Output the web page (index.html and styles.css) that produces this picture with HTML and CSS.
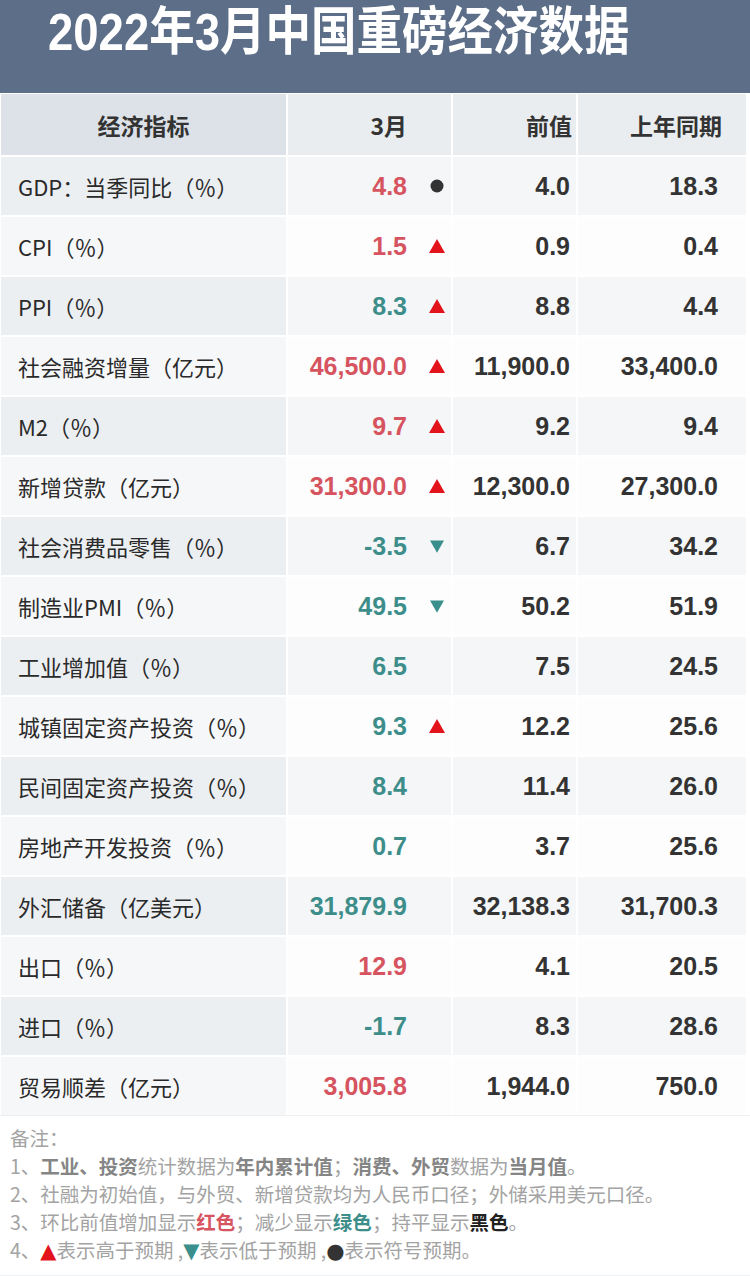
FILE: index.html
```html
<!DOCTYPE html>
<html lang="zh-CN">
<head>
<meta charset="utf-8">
<title>2022年3月中国重磅经济数据</title>
<link rel="stylesheet" href="styles.css">
</head>
<body>
<div class="page">
  <header class="banner">
    <h1 class="title">2022年3月中国重磅经济数据</h1>
  </header>

  <div class="table">
    <div class="row head">
      <div class="cell c1 center">经济指标</div>
      <div class="cell c2"><span class="num">3月</span><span class="sym"></span></div>
      <div class="cell c3">前值</div>
      <div class="cell c4">上年同期</div>
    </div>

    <div class="row odd">
      <div class="cell c1">GDP：当季同比（％）</div>
      <div class="cell c2"><span class="num red">4.8</span><span class="sym"><svg class="dot" viewBox="0 0 14 14"><circle cx="7" cy="7" r="6.5"/></svg></span></div>
      <div class="cell c3">4.0</div>
      <div class="cell c4">18.3</div>
    </div>
    <div class="row even">
      <div class="cell c1">CPI（％）</div>
      <div class="cell c2"><span class="num red">1.5</span><span class="sym"><svg class="up" viewBox="0 0 16 14"><polygon points="8,0 16,14 0,14"/></svg></span></div>
      <div class="cell c3">0.9</div>
      <div class="cell c4">0.4</div>
    </div>
    <div class="row odd">
      <div class="cell c1">PPI（％）</div>
      <div class="cell c2"><span class="num green">8.3</span><span class="sym"><svg class="up" viewBox="0 0 16 14"><polygon points="8,0 16,14 0,14"/></svg></span></div>
      <div class="cell c3">8.8</div>
      <div class="cell c4">4.4</div>
    </div>
    <div class="row even">
      <div class="cell c1">社会融资增量（亿元）</div>
      <div class="cell c2"><span class="num red">46,500.0</span><span class="sym"><svg class="up" viewBox="0 0 16 14"><polygon points="8,0 16,14 0,14"/></svg></span></div>
      <div class="cell c3">11,900.0</div>
      <div class="cell c4">33,400.0</div>
    </div>
    <div class="row odd">
      <div class="cell c1">M2（％）</div>
      <div class="cell c2"><span class="num red">9.7</span><span class="sym"><svg class="up" viewBox="0 0 16 14"><polygon points="8,0 16,14 0,14"/></svg></span></div>
      <div class="cell c3">9.2</div>
      <div class="cell c4">9.4</div>
    </div>
    <div class="row even">
      <div class="cell c1">新增贷款（亿元）</div>
      <div class="cell c2"><span class="num red">31,300.0</span><span class="sym"><svg class="up" viewBox="0 0 16 14"><polygon points="8,0 16,14 0,14"/></svg></span></div>
      <div class="cell c3">12,300.0</div>
      <div class="cell c4">27,300.0</div>
    </div>
    <div class="row odd">
      <div class="cell c1">社会消费品零售（％）</div>
      <div class="cell c2"><span class="num green">-3.5</span><span class="sym"><svg class="down" viewBox="0 0 16 14"><polygon points="0,0 16,0 8,14"/></svg></span></div>
      <div class="cell c3">6.7</div>
      <div class="cell c4">34.2</div>
    </div>
    <div class="row even">
      <div class="cell c1">制造业PMI（％）</div>
      <div class="cell c2"><span class="num green">49.5</span><span class="sym"><svg class="down" viewBox="0 0 16 14"><polygon points="0,0 16,0 8,14"/></svg></span></div>
      <div class="cell c3">50.2</div>
      <div class="cell c4">51.9</div>
    </div>
    <div class="row odd">
      <div class="cell c1">工业增加值（％）</div>
      <div class="cell c2"><span class="num green">6.5</span><span class="sym"></span></div>
      <div class="cell c3">7.5</div>
      <div class="cell c4">24.5</div>
    </div>
    <div class="row even">
      <div class="cell c1">城镇固定资产投资（％）</div>
      <div class="cell c2"><span class="num green">9.3</span><span class="sym"><svg class="up" viewBox="0 0 16 14"><polygon points="8,0 16,14 0,14"/></svg></span></div>
      <div class="cell c3">12.2</div>
      <div class="cell c4">25.6</div>
    </div>
    <div class="row odd">
      <div class="cell c1">民间固定资产投资（％）</div>
      <div class="cell c2"><span class="num green">8.4</span><span class="sym"></span></div>
      <div class="cell c3">11.4</div>
      <div class="cell c4">26.0</div>
    </div>
    <div class="row even">
      <div class="cell c1">房地产开发投资（％）</div>
      <div class="cell c2"><span class="num green">0.7</span><span class="sym"></span></div>
      <div class="cell c3">3.7</div>
      <div class="cell c4">25.6</div>
    </div>
    <div class="row odd">
      <div class="cell c1">外汇储备（亿美元）</div>
      <div class="cell c2"><span class="num green">31,879.9</span><span class="sym"></span></div>
      <div class="cell c3">32,138.3</div>
      <div class="cell c4">31,700.3</div>
    </div>
    <div class="row even">
      <div class="cell c1">出口（％）</div>
      <div class="cell c2"><span class="num red">12.9</span><span class="sym"></span></div>
      <div class="cell c3">4.1</div>
      <div class="cell c4">20.5</div>
    </div>
    <div class="row odd">
      <div class="cell c1">进口（％）</div>
      <div class="cell c2"><span class="num green">-1.7</span><span class="sym"></span></div>
      <div class="cell c3">8.3</div>
      <div class="cell c4">28.6</div>
    </div>
    <div class="row even">
      <div class="cell c1">贸易顺差（亿元）</div>
      <div class="cell c2"><span class="num red">3,005.8</span><span class="sym"></span></div>
      <div class="cell c3">1,944.0</div>
      <div class="cell c4">750.0</div>
    </div>
  </div>

  <div class="notes">
    <p>备注：</p>
    <p>1、<b>工业、投资</b>统计数据为<b>年内累计值</b>；<b>消费、外贸</b>数据为<b>当月值</b>。</p>
    <p>2、社融为初始值，与外贸、新增贷款均为人民币口径；外储采用美元口径。</p>
    <p>3、环比前值增加显示<b class="t-red">红色</b>；减少显示<b class="t-green">绿色</b>；持平显示<b class="t-black">黑色</b>。</p>
    <p>4、<span class="n-up">▲</span>表示高于预期 ,<span class="n-down">▼</span>表示低于预期 ,<span class="n-dot">●</span>表示符号预期。</p>
  </div>
</div>
</body>
</html>
```

FILE: styles.css
```css
* { box-sizing: border-box; }

html, body {
  margin: 0;
  padding: 0;
  background: #ffffff;
}

.page {
  width: 750px;
  height: 1276px;
  overflow: hidden;
  font-family: "Noto Sans CJK SC", "Noto Sans", sans-serif;
  color: #333333;
}

.banner {
  height: 93px;
  background: #5c6e88;
  padding: 2px 0 0 48px;
}

.title {
  margin: 0;
  font-family: "Liberation Sans", "Noto Sans CJK SC", sans-serif;
  font-weight: bold;
  font-size: 45.5px;
  line-height: 54px;
  color: #ffffff;
  transform: scaleY(1.15);
  transform-origin: left top;
}

.table {
  display: flex;
  flex-direction: column;
  gap: 2px;
  padding: 1px 4px 0 1px;
  background: #ffffff;
}

.row {
  display: grid;
  grid-template-columns: 285px 163px 123px 168px;
  column-gap: 2px;
  height: 58px;
}

.row.head {
  height: 61px;
}

.cell {
  display: flex;
  align-items: center;
  justify-content: flex-end;
  font-family: "Liberation Sans", "Noto Sans CJK SC", sans-serif;
  font-weight: bold;
  font-size: 25px;
  color: #333333;
}

.cell.c1 {
  justify-content: flex-start;
  padding-left: 17px;
  font-family: "Noto Sans CJK SC", sans-serif;
  font-weight: normal;
  font-size: 22px;
  color: #2a2a2a;
}

.cell.c1.center {
  justify-content: center;
  padding-left: 0;
}

.cell.c3 { padding-right: 6px; }
.cell.c4 { padding-right: 28px; }

.head .cell {
  font-family: "Noto Sans CJK SC", sans-serif;
  font-weight: bold;
  font-size: 23px;
  color: #333333;
}

.head .cell.c4 { padding-right: 24px; }
.head .cell.c3 { padding-right: 4px; }

.head .c1 { background: #dde2e8; }
.head .c2, .head .c3, .head .c4 { background: #e9edf0; }

.odd .c1 { background: #eceff2; }
.odd .c2, .odd .c3, .odd .c4 { background: #f4f6f7; }

.even .c1 { background: #f6f7f9; }
.even .c2, .even .c3, .even .c4 { background: #fdfdfd; }

.num { margin-right: 16px; }
.num.red { color: #d6545f; }
.num.green { color: #3d8e8b; }

.sym {
  width: 28px;
  display: flex;
  align-items: center;
  justify-content: center;
}

.sym svg { display: block; }
.sym .up { width: 16px; height: 14px; fill: #e3131b; }
.sym .down { width: 14px; height: 13px; fill: #3a8f8c; }
.sym .dot { width: 14px; height: 14px; fill: #333333; }

.notes {
  height: 161px;
  border-top: 1px solid #eef0f2;
  border-bottom: 1px solid #eef0f2;
  padding: 8px 0 0 10px;
  font-family: "Noto Sans CJK SC", sans-serif;
  font-size: 19.5px;
  line-height: 28px;
  color: #a3a3a3;
}

.notes p { margin: 0; white-space: nowrap; }
.notes b { font-weight: bold; color: #858585; }
.notes .t-red { color: #d6545f; }
.notes .t-green { color: #3d8e8b; }
.notes .t-black { color: #222222; }

.n-up, .n-down, .n-dot {
  font-family: "DejaVu Sans", sans-serif;
  font-size: 21px;
  line-height: 1;
}
.n-up { color: #e3131b; }
.n-down { color: #3a8f8c; }
.n-dot { color: #333333; }
```
